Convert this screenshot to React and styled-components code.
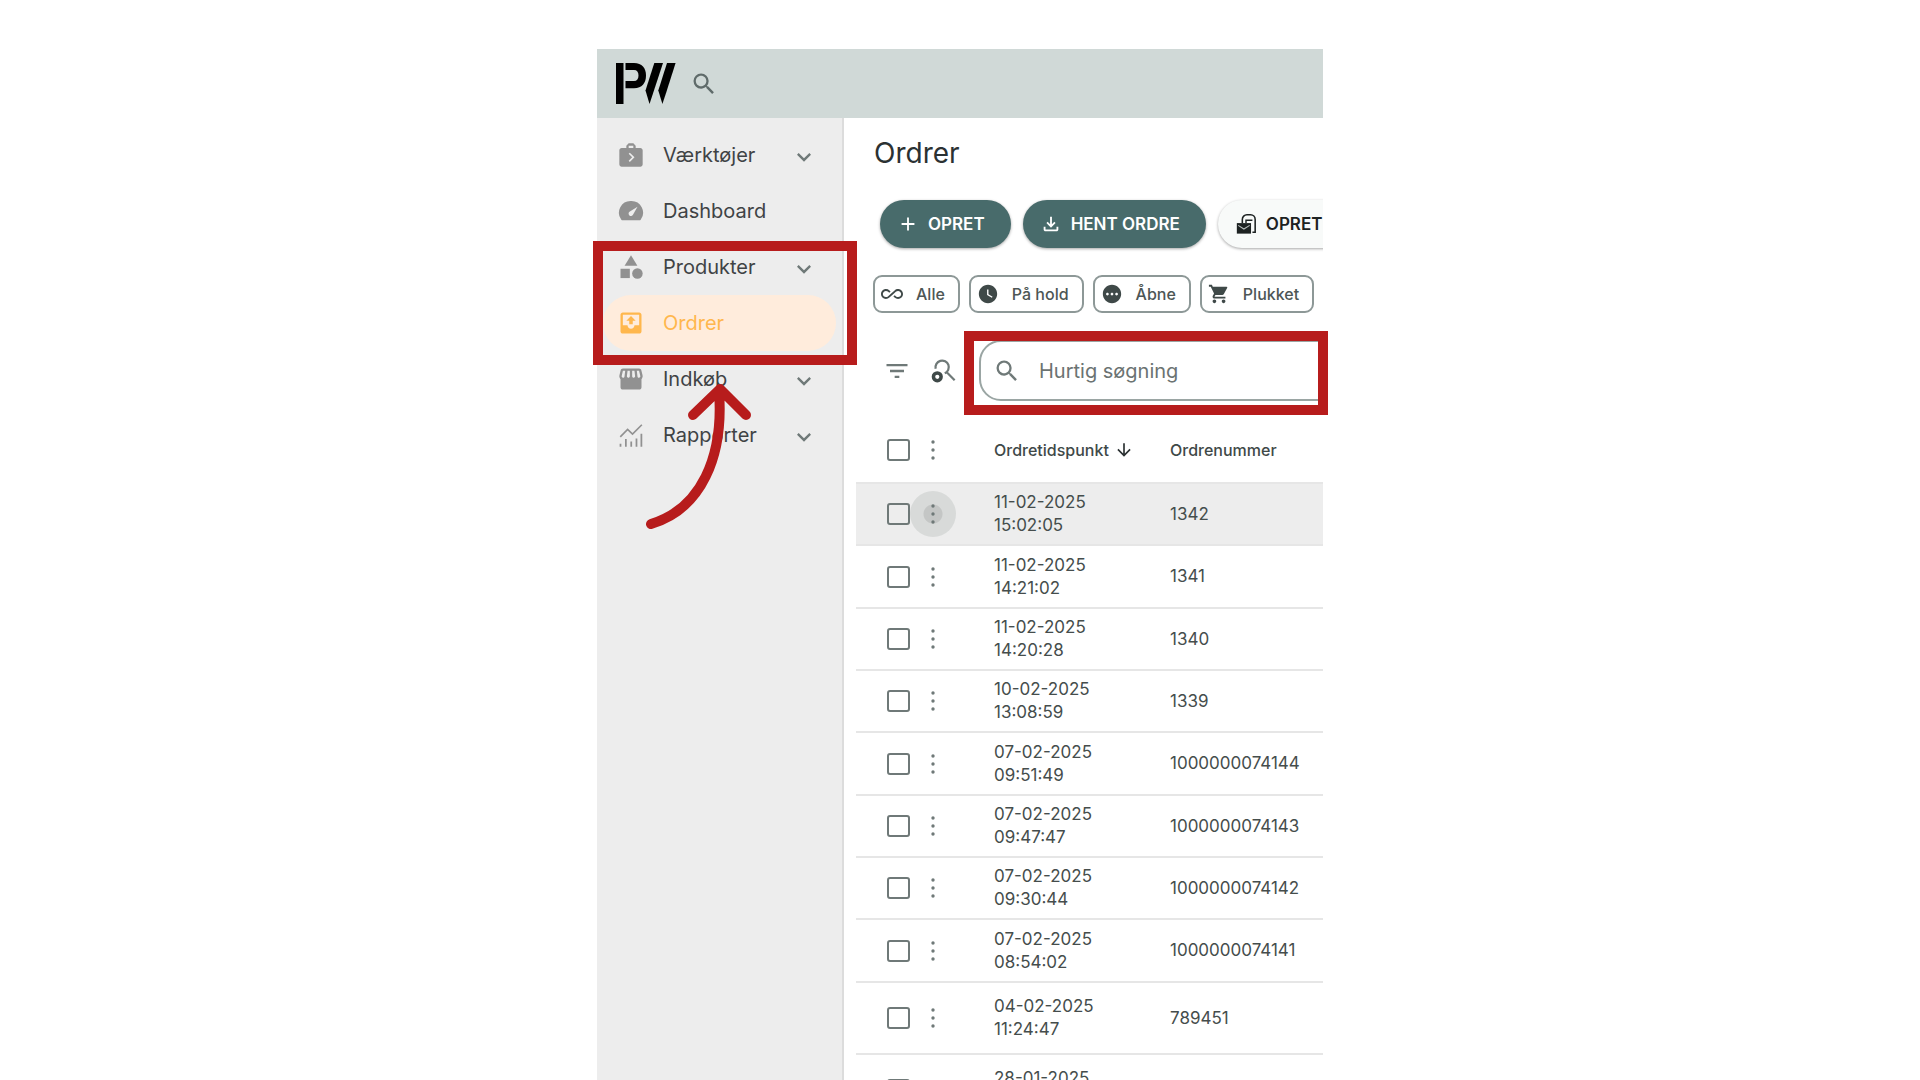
import React from "react";
import styled, { createGlobalStyle } from "styled-components";
import {
  MdAdd,
  MdAllInclusive,
  MdArrowDownward,
  MdCategory,
  MdExpandMore,
  MdFilterList,
  MdOutlineFileDownload,
  MdPending,
  MdSearch,
  MdShoppingCart,
  MdWatchLater,
} from "react-icons/md";

const GlobalStyle = createGlobalStyle`
  * {
    box-sizing: border-box;
  }
  body {
    margin: 0;
    background: #fff;
    color: #3f4948;
    font-family: Inter, "Liberation Sans", sans-serif;
  }
  button, input {
    font-family: inherit;
  }
`;

const Logo = () => (
  <svg width="60" height="41" viewBox="0 0 60 41" aria-label="PW" role="img">
    <path d="M0 0H7.500V41H0Z" />
    <path d="M9.500 0H18C26 0 30 5 30 12.500C30 20 26 25.300 18 25.300H9.500V18H18C21 18 22.500 16 22.500 12.500C22.500 9 21 7 18 7H9.500Z" />
    <path d="M38.300 0H47L37.300 29.500L33.500 41L29.500 27.500Z" />
    <path d="M51 0H59.600L50.200 29.500L46.400 41L42.300 27.500Z" />
  </svg>
);

const ToolsIcon = () => (
  <svg width="28" height="28" viewBox="0 0 24 24" fill="currentColor">
    <path d="M20 6h-4V4l-2-2h-4L8 4v2H4c-1.100 0-2 .9-2 2v12c0 1.100.9 2 2 2h16c1.100 0 2-.9 2-2V8c0-1.100-.9-2-2-2zM10 4h4v2h-4V4zm1 14-1-1 3-3-3-3 1-1 4 4-4 4z" />
  </svg>
);

const DashIcon = () => (
  <svg width="28" height="28" viewBox="0 0 24 24">
    <path d="M12 3.500A10 10 0 0 0 3.700 19.500Q4.100 20 4.800 20H19.200Q19.900 20 20.300 19.500A10 10 0 0 0 12 3.500Z" fill="currentColor" />
    <path d="M17.600 8.300 13.700 15.200A2 2 0 1 1 10.700 12.700Z" fill="#ededed" />
  </svg>
);

const OutboxIcon = () => (
  <svg width="28" height="28" viewBox="0 0 24 24" fill="currentColor">
    <path d="M19 3H5c-1.100 0-2 .9-2 2v14c0 1.100.9 2 2 2h14c1.100 0 2-.9 2-2V5c0-1.100-.9-2-2-2zm0 11h-4c0 1.660-1.350 3-3 3s-3-1.340-3-3H5V5h14v9zM8 10h2.500v3h3v-3H16l-4-4-4 4z" />
  </svg>
);

const StoreIcon = () => (
  <svg width="28" height="28" viewBox="0 0 24 24" fill="currentColor">
    <path d="M21.900 8.890 20.850 4.520C20.630 3.600 19.850 3 18.940 3H5.050c-.9 0-1.690.63-1.900 1.520L2.100 8.890c-.24 1.020-.02 2.060.62 2.880.08.11.19.19.28.29V19c0 1.100.9 2 2 2h14c1.100 0 2-.9 2-2v-6.940c.09-.09.2-.18.28-.28.64-.82.87-1.870.62-2.890zM18.910 4.990l1.050 4.370c.1.420.01.84-.25 1.170-.14.18-.44.47-.94.47-.61 0-1.140-.49-1.210-1.140L16.980 5l1.930-.01zM13 5h1.960l.54 4.520c.05.39-.07.78-.33 1.070-.22.26-.54.41-.95.41-.67 0-1.220-.59-1.220-1.310V5zM8.490 9.520 9.040 5H11v4.690c0 .72-.55 1.310-1.290 1.310-.34 0-.65-.15-.89-.41-.25-.29-.37-.68-.33-1.070zM4.040 9.360 5.050 5h1.970l-.58 4.860C6.360 10.510 5.840 11 5.230 11c-.49 0-.8-.29-.93-.47-.27-.32-.36-.75-.26-1.170z" />
  </svg>
);

const ReportIcon = () => (
  <svg width="28" height="28" viewBox="0 0 24 24" fill="none" stroke="currentColor">
    <path d="M2.800 13.600 9.100 7.200 13.300 11.200 21.300 3.200" strokeWidth="1.400" />
    <path d="M3 22V19.500M7.600 22V15.500M12.200 22V17.500M16.700 22V15M20.900 22V11" strokeWidth="1.500" />
  </svg>
);

const BatchIcon = () => (
  <svg width="22" height="22" viewBox="0 0 24 24" fill="none" stroke="currentColor">
    <path d="M8 11V7a5 5 0 0 1 5-5h4a5 5 0 0 1 5 5v14h-3" strokeWidth="1.700" />
    <path d="M12 11V8h7" strokeWidth="1.600" />
    <path d="M2 11h15.500v11.500H2Z" fill="currentColor" stroke="none" />
    <path d="M3.500 13.500 9.700 17.500 16 13.500" stroke="#b9bfbe" strokeWidth="1.200" />
  </svg>
);

const SavedSearchIcon = () => (
  <svg width="28" height="28" viewBox="0 0 24 24" fill="none" stroke="currentColor">
    <path d="M5.700 10A5.700 5.700 0 1 1 13.500 14M15 12.800 22 19.900" strokeWidth="1.900" />
    <circle cx="7.100" cy="17" r="3.300" stroke="#3f4948" strokeWidth="3" />
  </svg>
);

const DotsIcon = () => (
  <svg width="28" height="28" viewBox="0 0 28 28" fill="currentColor">
    <circle cx="14" cy="6" r="1.700" />
    <circle cx="14" cy="14" r="1.700" />
    <circle cx="14" cy="22" r="1.700" />
  </svg>
);

const navItems = [
  { label: "Værktøjer", icon: <ToolsIcon />, expandable: true },
  { label: "Dashboard", icon: <DashIcon /> },
  { label: "Produkter", icon: <MdCategory />, expandable: true },
  { label: "Ordrer", icon: <OutboxIcon />, active: true },
  { label: "Indkøb", icon: <StoreIcon />, expandable: true },
  { label: "Rapporter", icon: <ReportIcon />, expandable: true },
];

const chips = [
  { label: "Alle", icon: <MdAllInclusive /> },
  { label: "På hold", icon: <MdWatchLater /> },
  { label: "Åbne", icon: <MdPending /> },
  { label: "Plukket", icon: <MdShoppingCart /> },
];

const orders = [
  { date: "11-02-2025", time: "15:02:05", number: "1342", hovered: true },
  { date: "11-02-2025", time: "14:21:02", number: "1341" },
  { date: "11-02-2025", time: "14:20:28", number: "1340" },
  { date: "10-02-2025", time: "13:08:59", number: "1339" },
  { date: "07-02-2025", time: "09:51:49", number: "1000000074144" },
  { date: "07-02-2025", time: "09:47:47", number: "1000000074143" },
  { date: "07-02-2025", time: "09:30:44", number: "1000000074142" },
  { date: "07-02-2025", time: "08:54:02", number: "1000000074141" },
  { date: "04-02-2025", time: "11:24:47", number: "789451", tall: true },
  { date: "28-01-2025", time: "", number: "", tall: true },
];

const App = () => {
  return (
    <Stage>
      <GlobalStyle />
      <Guide>
        <Window>
          <TopBar>
            <Logo />
            <BarButton aria-label="Søg">
              <MdSearch />
            </BarButton>
          </TopBar>
          <Body>
            <Sidebar>
              {navItems.map((item) => (
                <NavLink href="#" key={item.label} $active={item.active}>
                  <NavIcon $active={item.active}>{item.icon}</NavIcon>
                  <NavLabel>{item.label}</NavLabel>
                  {item.expandable && <MdExpandMore />}
                </NavLink>
              ))}
            </Sidebar>
            <Main>
              <Title>Ordrer</Title>
              <Actions>
                <ActionButton>
                  <MdAdd />
                  OPRET
                </ActionButton>
                <ActionButton>
                  <MdOutlineFileDownload />
                  HENT ORDRE
                </ActionButton>
                <ActionButton $light>
                  <BatchIcon />
                  OPRET
                </ActionButton>
              </Actions>
              <Chips>
                {chips.map((chip) => (
                  <Chip key={chip.label}>
                    {chip.icon}
                    {chip.label}
                  </Chip>
                ))}
              </Chips>
              <Filters>
                <IconButton aria-label="Filter">
                  <MdFilterList />
                </IconButton>
                <IconButton aria-label="Gemte søgninger">
                  <SavedSearchIcon />
                </IconButton>
                <SearchField>
                  <MdSearch />
                  <SearchInput type="text" placeholder="Hurtig søgning" aria-label="Hurtig søgning" />
                </SearchField>
              </Filters>
              <Table>
                <colgroup>
                  <CheckCol />
                  <MenuCol />
                  <TimeCol />
                  <col />
                </colgroup>
                <thead>
                  <HeadRow>
                    <CheckHead>
                      <Checkbox type="checkbox" aria-label="Vælg alle" />
                    </CheckHead>
                    <th>
                      <DotsButton aria-label="Kolonner">
                        <DotsIcon />
                      </DotsButton>
                    </th>
                    <HeadCell>
                      <SortLabel>
                        Ordretidspunkt
                        <MdArrowDownward />
                      </SortLabel>
                    </HeadCell>
                    <HeadCell>Ordrenummer</HeadCell>
                  </HeadRow>
                </thead>
                <tbody>
                  {orders.map((order) => (
                    <Row key={order.date + order.time} $hovered={order.hovered} $tall={order.tall}>
                      <CheckCell>
                        <Checkbox type="checkbox" aria-label={"Vælg " + order.number} />
                      </CheckCell>
                      <td>
                        <DotsButton $pressed={order.hovered} aria-label={"Menu " + order.number}>
                          <DotsIcon />
                        </DotsButton>
                      </td>
                      <Cell>
                        {order.date}
                        <br />
                        {order.time || "\u00a0"}
                      </Cell>
                      <Cell>{order.number}</Cell>
                    </Row>
                  ))}
                </tbody>
              </Table>
            </Main>
          </Body>
        </Window>
        <MenuMarker />
        <SearchMarker />
        <Arrow width="108" height="150" viewBox="0 0 108 150">
          <path d="M7 141C57 126 80 74 75 8M49 32 76 6 102 32" />
        </Arrow>
      </Guide>
    </Stage>
  );
};

export default App;

const Stage = styled.div`
  height: 100vh;
  padding-top: 49px;
  overflow: hidden;
`;

const Guide = styled.div`
  position: relative;
  max-width: 726px;
  height: 100%;
  margin: 0 auto;
`;

const Window = styled.div`
  display: flex;
  flex-direction: column;
  height: 100%;
  overflow: hidden;
`;

const TopBar = styled.header`
  display: flex;
  flex-shrink: 0;
  align-items: center;
  gap: 14px;
  height: 69px;
  padding: 0 19px;
  background: #d0d9d7;
`;

const BarButton = styled.button`
  display: flex;
  padding: 0;
  border: 0;
  background: none;
  color: #5f6b6a;
  font-size: 28px;
`;

const Body = styled.div`
  display: flex;
  flex: 1;
  min-height: 0;
`;

const Sidebar = styled.nav`
  flex: 0 0 247px;
  padding: 9px 6px 0;
  background: #ededed;
  border-right: 2px solid #dcdcdc;
`;

const NavLink = styled.a`
  display: flex;
  align-items: center;
  height: 56px;
  padding: 0 18px 0 14px;
  border-radius: 28px;
  background: ${(props) => (props.$active ? "#ffecdc" : "none")};
  color: ${(props) => (props.$active ? "#ffb74d" : "#3f4345")};
  font-size: 20px;
  text-decoration: none;
  > svg {
    margin-top: 3px;
    color: #6f7978;
    font-size: 28px;
  }
`;

const NavIcon = styled.span`
  display: flex;
  margin-right: 18px;
  color: ${(props) => (props.$active ? "#ffb74d" : "#919191")};
  font-size: 28px;
`;

const NavLabel = styled.span`
  flex: 1;
`;

const Main = styled.main`
  flex: 1;
  min-width: 0;
  padding: 16px 0 0 12px;
  overflow: hidden;
  background: #fff;
`;

const Title = styled.h1`
  margin: 0 0 28px 18px;
  color: #2b3132;
  font-size: 28px;
  font-weight: 400;
  line-height: 38px;
`;

const Actions = styled.div`
  display: flex;
  gap: 12px;
  margin: 0 0 27px 24px;
`;

const ActionButton = styled.button`
  display: flex;
  flex-shrink: 0;
  align-items: center;
  gap: 9px;
  height: 48px;
  padding: 0 26px 0 17px;
  border: 0;
  border-radius: 24px;
  background: ${(props) => (props.$light ? "#f8faf9" : "#486b6b")};
  box-shadow: 0 1px 3px rgb(0 0 0 / 35%);
  color: ${(props) => (props.$light ? "#1d2222" : "#fff")};
  font-size: 17px;
  font-weight: 600;
  line-height: 20px;
  svg {
    width: 22px;
    height: 22px;
  }
`;

const Chips = styled.div`
  display: flex;
  gap: 9px;
  margin: 0 0 27px 17px;
`;

const Chip = styled.button`
  display: flex;
  flex-shrink: 0;
  align-items: center;
  gap: 13px;
  height: 38px;
  padding: 0 13px 0 6px;
  border: 2px solid #8d9897;
  border-radius: 9px;
  background: #fff;
  color: #4d5655;
  font-size: 16px;
  font-weight: 500;
  svg {
    width: 22px;
    height: 22px;
    color: #3f4948;
  }
`;

const Filters = styled.div`
  display: flex;
  align-items: center;
  margin-left: 27px;
`;

const IconButton = styled.button`
  display: flex;
  flex-shrink: 0;
  margin-right: 18px;
  padding: 0;
  border: 0;
  background: none;
  color: #6f7978;
  font-size: 28px;
`;

const SearchField = styled.label`
  display: flex;
  flex: 0 0 480px;
  align-items: center;
  gap: 18px;
  height: 61px;
  margin-left: 4px;
  padding-left: 12px;
  border: 2px solid #9aa5a3;
  border-radius: 22px;
  svg {
    color: #6f7978;
    font-size: 28px;
  }
`;

const SearchInput = styled.input`
  flex: 1;
  padding: 0;
  border: 0;
  outline: 0;
  background: none;
  font-size: 20px;
  &::placeholder {
    color: #6b7372;
    opacity: 1;
  }
`;

const Table = styled.table`
  width: 100%;
  margin-top: 16px;
  border-collapse: collapse;
  table-layout: fixed;
  th,
  td {
    padding: 0;
    border-bottom: 2px solid #e6e6e6;
    text-align: left;
  }
`;

const CheckCol = styled.col`
  width: 54px;
`;

const MenuCol = styled.col`
  width: 84px;
`;

const TimeCol = styled.col`
  width: 176px;
`;

const HeadRow = styled.tr`
  height: 66px;
`;

const CheckHead = styled.th`
  && {
    padding-left: 31px;
  }
`;

const HeadCell = styled.th`
  color: #3f4948;
  font-size: 16px;
  font-weight: 500;
`;

const SortLabel = styled.span`
  display: flex;
  align-items: center;
  gap: 5px;
  svg {
    color: #2b3132;
    font-size: 20px;
  }
`;

const Row = styled.tr`
  height: ${(props) => (props.$tall ? "72px" : "62px")};
  background: ${(props) => (props.$hovered ? "#ededed" : "#fff")};
  &:nth-child(3n + 2) {
    height: ${(props) => (props.$tall ? "72px" : "63px")};
  }
`;

const Cell = styled.td`
  color: #454d4c;
  font-size: 17px;
  line-height: 23px;
`;

const CheckCell = styled.td`
  && {
    padding-left: 31px;
  }
`;

const Checkbox = styled.input`
  display: block;
  width: 23px;
  height: 22px;
  margin: 0;
  appearance: none;
  border: 2px solid #6f7978;
  border-radius: 3px;
  background: transparent;
`;

const DotsButton = styled.button`
  display: flex;
  align-items: center;
  justify-content: center;
  width: 46px;
  height: 46px;
  padding: 0;
  border: 0;
  border-radius: 50%;
  background: ${(props) =>
    props.$pressed ? "radial-gradient(circle, #c4c6c5 9px, #d8dad9 10px)" : "none"};
  color: #6f7978;
`;

const Marker = styled.div`
  position: absolute;
  border: 10px solid #b71c1c;
  pointer-events: none;
`;

const MenuMarker = styled(Marker)`
  top: 192px;
  left: -4px;
  width: 264px;
  height: 124px;
`;

const SearchMarker = styled(Marker)`
  top: 282px;
  left: 367px;
  width: 364px;
  height: 84px;
`;

const Arrow = styled.svg`
  position: absolute;
  top: 334px;
  left: 47px;
  fill: none;
  stroke: #b71c1c;
  stroke-width: 10;
  stroke-linecap: round;
  stroke-linejoin: round;
  pointer-events: none;
`;
